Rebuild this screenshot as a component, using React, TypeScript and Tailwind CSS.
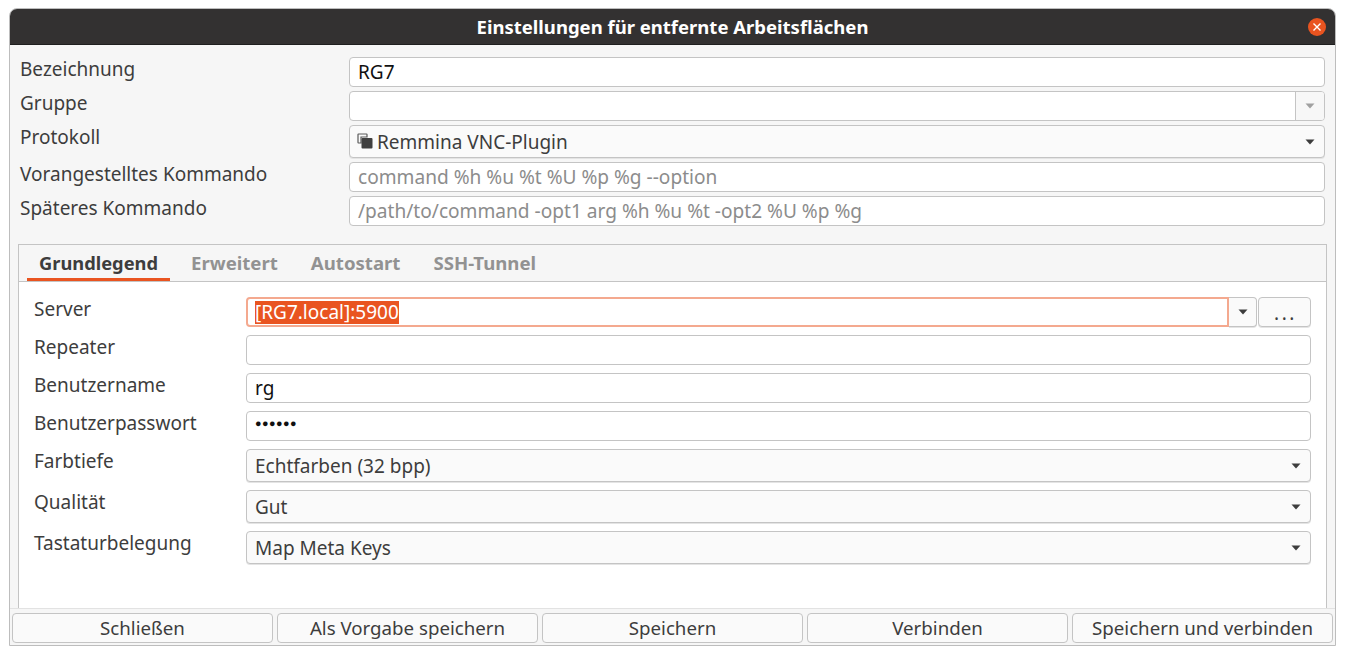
import React from "react";

const Caret = ({ c = "#3d3d3d" }: { c?: string }) => (
  <svg width="10" height="6" viewBox="0 0 10 6" className="shrink-0"><path d="M0.5 0.5h9L5 5.5z" fill={c} /></svg>
);

const Field = ({ children, muted }: { children?: React.ReactNode; muted?: boolean }) => (
  <div className={`h-[30px] rounded-[4px] border border-[#c4c4c4] bg-white pl-2 flex items-center leading-none ${muted ? "text-[#8c8c8c] text-[19.1px] pt-[2px]" : "text-[#111]"}`}>
    {children}
  </div>
);

const Combo = ({ children, icon }: { children: React.ReactNode; icon?: React.ReactNode }) => (
  <div className="h-[33px] rounded-[4px] border border-[#c4c4c4] bg-[#fafafa] pl-2 pr-[9px] flex items-center justify-between text-[#3d3d3d] shadow-[0_1px_0_#e4e4e4]">
    <span className="flex items-center gap-1 pt-[2px]">{icon}{children}</span>
    <Caret />
  </div>
);

const Label = ({ children, className = "" }: { children: React.ReactNode; className?: string }) => (
  <div className={`text-[#3d3d3d] leading-[24px] ${className}`}>{children}</div>
);

const Pages = () => (
  <svg width="16" height="16" viewBox="0 0 16 16" className="shrink-0 -ml-[1px] -mt-[3px]">
    <path d="M1 1.5Q1 1 1.5 1h8q.5 0 .5.5V4H4v6H1.5Q1 10 1 9.5z" fill="none" stroke="#5a5a5a" strokeWidth="1.2" />
    <rect x="4.5" y="5" width="11" height="10.5" rx="1" fill="#3f3f3f" />
  </svg>
);

const tabs = ["Erweitert", "Autostart", "SSH-Tunnel"];

export default function App() {
  return (
    <div className="h-[655px] w-[1345px] bg-white pt-2 pl-[9px] pr-[9px] text-[19px]" style={{ fontFamily: '"Noto Sans", sans-serif' }}>
      <div className="h-[638px] flex flex-col rounded-t-[8px] border border-[#bdbdbd] bg-[#f6f6f6]">
        <div className="h-[36px] shrink-0 rounded-t-[7px] bg-[#333131] border-b border-[#1f1f1f] relative flex items-center justify-center text-white font-bold text-[18.5px]">
          Einstellungen für entfernte Arbeitsflächen
          <div className="absolute right-[9px] top-[9px] w-[18px] h-[18px] rounded-full bg-[#e95420] flex items-center justify-center">
            <svg width="10" height="10" viewBox="0 0 10 10"><path d="M1.5 1.5l7 7M8.5 1.5l-7 7" stroke="#fff" strokeWidth="1.4" /></svg>
          </div>
        </div>

        <div className="flex-1 flex flex-col min-h-0">
          <div className="grid grid-cols-[329px_976px] pl-[10px] pt-3">
            <div className="flex flex-col">
              <Label className="h-[34px]">Bezeichnung</Label>
              <Label className="h-[34px]">Gruppe</Label>
              <Label className="h-[37px]">Protokoll</Label>
              <Label className="h-[34px]">Vorangestelltes Kommando</Label>
              <Label className="h-[30px]">Späteres Kommando</Label>
            </div>
            <div className="flex flex-col gap-1">
              <Field>RG7</Field>
              <div className="h-[30px] rounded-[4px] border border-[#c4c4c4] bg-white flex justify-end">
                <div className="w-[29px] border-l border-[#c4c4c4] bg-[#f7f7f7] rounded-r-[3px] flex items-center justify-center"><Caret c="#a0a0a0" /></div>
              </div>
              <Combo icon={<Pages />}>Remmina VNC-Plugin</Combo>
              <Field muted>command %h %u %t %U %p %g --option</Field>
              <Field muted>/path/to/command -opt1 arg %h %u %t -opt2 %U %p %g</Field>
            </div>
          </div>

          <div className="flex-1 min-h-0 mt-[18px] ml-2 mr-2 border-x border-t border-[#c4c4c4] flex flex-col">
            <div className="h-[37px] shrink-0 border-b border-[#c4c4c4] flex gap-[9px] pl-2 font-bold text-[18.6px]">
              <div className="h-[36px] px-3 flex items-center text-[18.3px] text-[#3d3d3d] border-b-[3px] border-[#e95420] pt-[3px]">Grundlegend</div>
              {tabs.map((t) => (
                <div key={t} className="h-[36px] px-3 flex items-center text-[#929292]">{t}</div>
              ))}
            </div>
            <div className="flex-1 bg-white pt-[15px] pl-[15px] pr-[15px] grid grid-cols-[212px_1fr] content-start">
              <div className="flex flex-col">
                <Label className="h-[38px]">Server</Label>
                <Label className="h-[38px]">Repeater</Label>
                <Label className="h-[38px]">Benutzername</Label>
                <Label className="h-[38px]">Benutzerpasswort</Label>
                <Label className="h-[41px]">Farbtiefe</Label>
                <Label className="h-[41px]">Qualität</Label>
                <Label className="h-[33px]">Tastaturbelegung</Label>
              </div>
              <div className="flex flex-col gap-2">
                <div className="flex h-[30px]">
                  <div className="flex-1 rounded-l-[4px] border-2 border-[#f4a98f] bg-white pl-[7px] flex items-center">
                    <span className="bg-[#e95420] text-white h-[23px] flex items-center">[RG7.local]:5900</span>
                  </div>
                  <div className="w-[28px] border border-l-0 border-[#c4c4c4] rounded-r-[4px] bg-[#fafafa] flex items-center justify-center shadow-[0_1px_0_#e4e4e4]"><Caret /></div>
                  <div className="w-[53px] ml-[1px] border border-[#c4c4c4] rounded-[4px] bg-[#fafafa] text-[#3d3d3d] flex items-center justify-center shadow-[0_1px_0_#e4e4e4] tracking-[2.5px] pt-[2px] pl-[2px]">...</div>
                </div>
                <Field />
                <Field>rg</Field>
                <Field><span className="tracking-[0.5px] text-[10.8px] -mt-[5px]">●●●●●●</span></Field>
                <Combo>Echtfarben (32 bpp)</Combo>
                <Combo>Gut</Combo>
                <Combo>Map Meta Keys</Combo>
              </div>
            </div>
          </div>

          <div className="h-[37px] shrink-0 border-t border-[#e2e2e2] grid grid-cols-5 gap-1 pl-[2px] pr-[2px] pt-[4px] text-[18.7px]">
            {["Schließen", "Als Vorgabe speichern", "Speichern", "Verbinden", "Speichern und verbinden"].map((t) => (
              <div key={t} className="h-[30px] rounded-[4px] border border-[#c4c4c4] bg-[#fafafa] flex items-center justify-center text-[#3d3d3d]">{t}</div>
            ))}
          </div>
        </div>
      </div>
    </div>
  );
}
